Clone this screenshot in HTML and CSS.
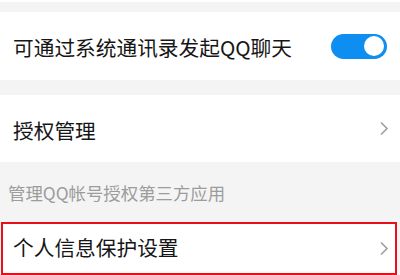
FILE: index.html
```html
<!DOCTYPE html>
<html lang="zh-CN">
<head>
    <meta charset="UTF-8">
    <meta name="viewport" content="width=device-width, initial-scale=1.0">
    <title>QQ 隐私设置</title>
    <link rel="stylesheet" href="styles.css">
</head>
<body>

    <div class="top-gap"></div>

    <div class="row contacts-row">
        <span class="label">可通过系统通讯录发起QQ聊天</span>
        <div class="switch on"></div>
    </div>

    <div class="gap"></div>

    <div class="row auth-row">
        <span class="label">授权管理</span>
        <svg class="chevron" width="10" height="15" viewBox="0 0 10 15">
            <path d="M2 1.5 L8 7.5 L2 13.5" fill="none" stroke="#a0a0a0" stroke-width="1.7"/>
        </svg>
    </div>

    <div class="note">管理QQ帐号授权第三方应用</div>

    <div class="row privacy-row">
        <span class="label">个人信息保护设置</span>
        <svg class="chevron" width="10" height="15" viewBox="0 0 10 15">
            <path d="M2 1.5 L8 7.5 L2 13.5" fill="none" stroke="#a0a0a0" stroke-width="1.7"/>
        </svg>
    </div>

</body>
</html>
```

FILE: styles.css
```css
/* Basic Styles */
body {
    margin: 0;
    padding: 0;
    background-color: #f4f4f4;
    font-family: "Noto Sans CJK SC", "Noto Sans", sans-serif;
    color: #161616;
    overflow: hidden;
}

.top-gap {
    height: 10px;
    border-top: 2px solid #fff;
}

.gap {
    height: 15px;
}

/* Rows */
.row {
    background-color: #fff;
    display: flex;
    align-items: center;
    justify-content: space-between;
    box-sizing: border-box;
    padding: 0 11px 0 13px;
}

.label {
    font-size: 20.7px;
    line-height: 1;
    position: relative;
    top: 1px;
}

.contacts-row {
    height: 68px;
    padding-right: 13px;
}

.auth-row {
    height: 67px;
}

.auth-row .label {
    top: 2px;
}

.privacy-row {
    height: 53px;
    margin: 0 3px 0 1px;
    border: 2px solid #e60f1a;
    padding: 0 6px 0 10px;
}

.privacy-row .label {
    top: -1px;
}

.chevron {
    display: block;
}

/* Toggle */
.switch {
    width: 56px;
    height: 25px;
    border-radius: 13px;
    background-color: #d0d0d0;
    position: relative;
}

.switch.on {
    background-color: #0d8ef0;
}

.switch::after {
    content: "";
    position: absolute;
    top: 2.5px;
    left: 3px;
    width: 20px;
    height: 20px;
    border-radius: 50%;
    background-color: #fff;
}

.switch.on::after {
    left: auto;
    right: 3px;
}

/* Section note */
.note {
    height: 60px;
    display: flex;
    align-items: center;
    padding-left: 8px;
    font-size: 17.4px;
    color: #9c9c9c;
}
```
